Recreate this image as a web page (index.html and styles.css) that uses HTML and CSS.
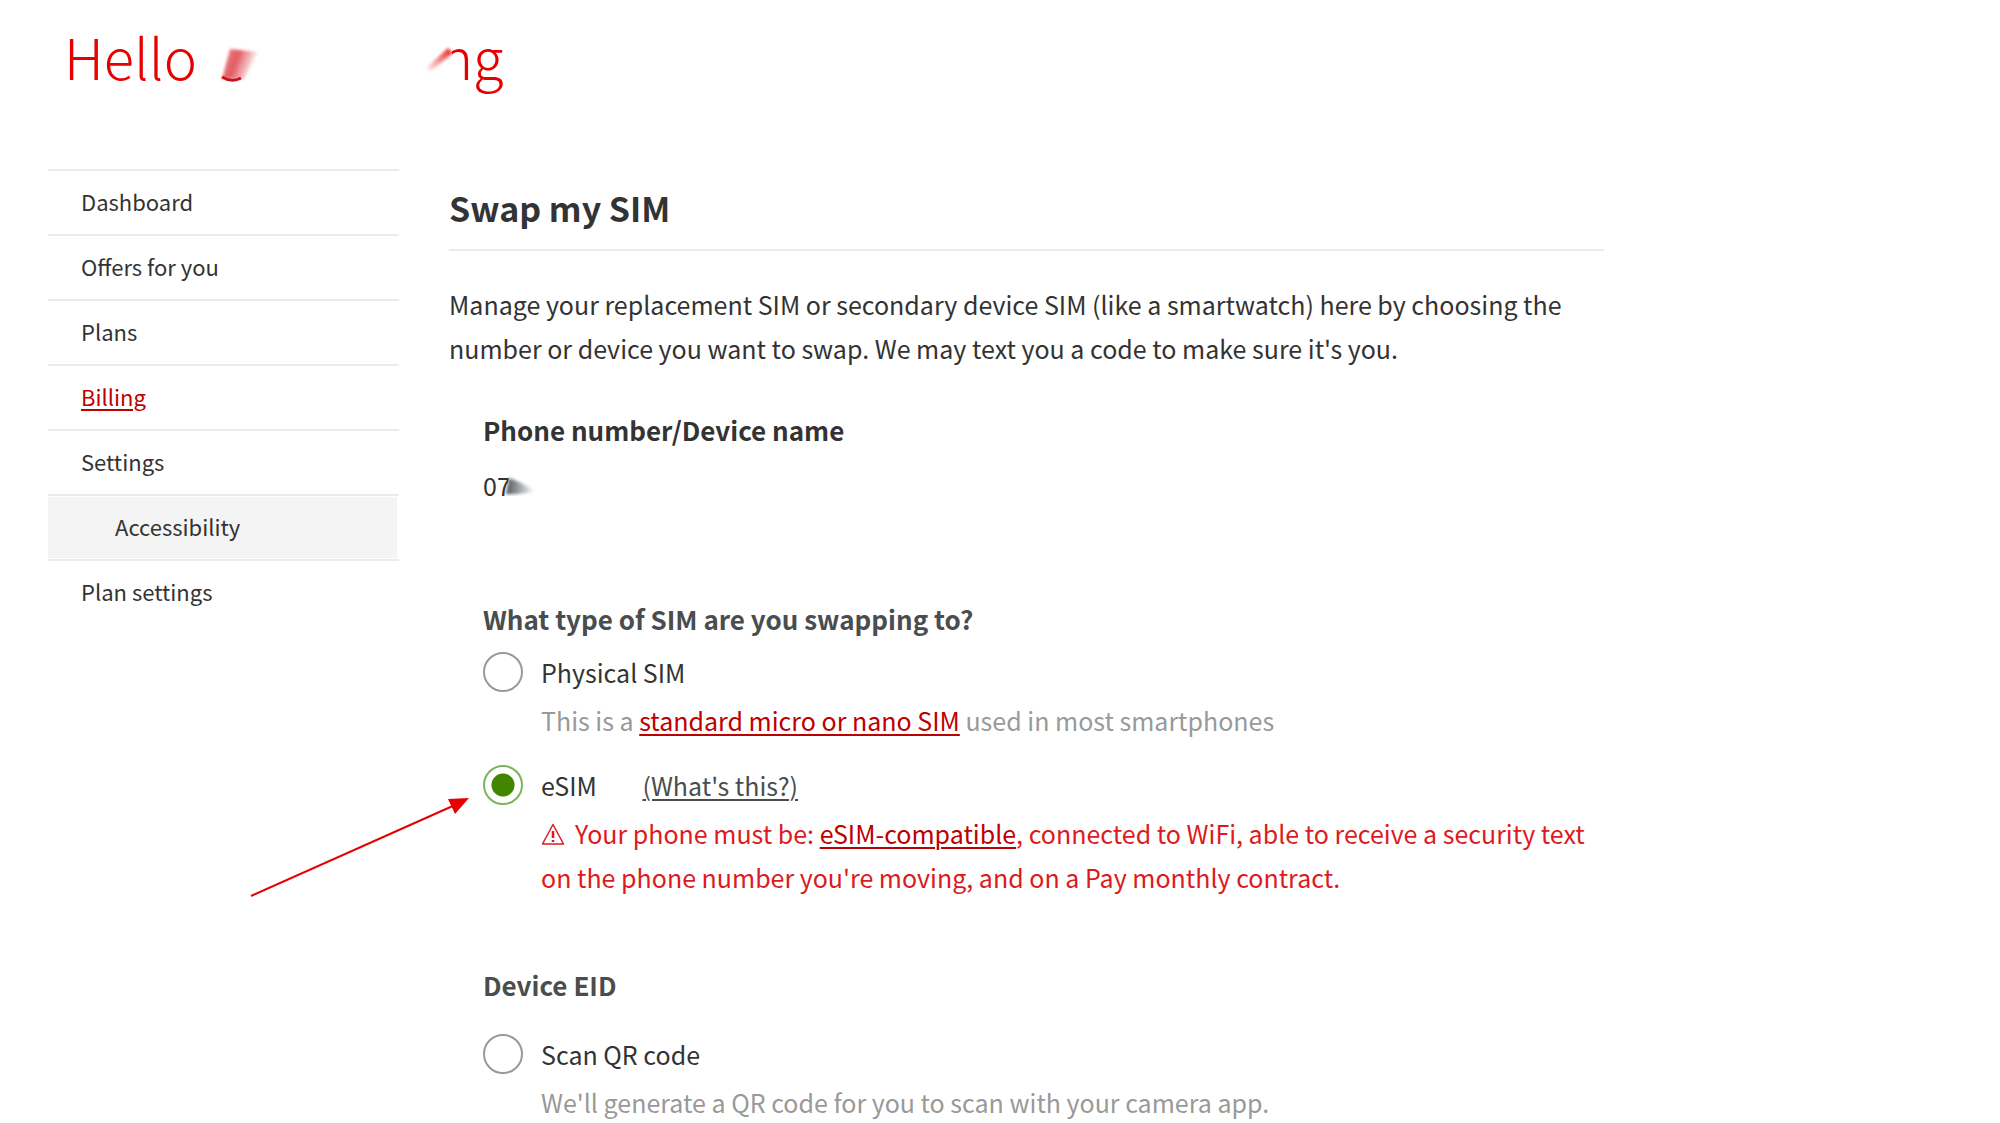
FILE: index.html
```html
<!DOCTYPE html>
<html lang="en">
<head>
    <meta charset="UTF-8">
    <meta name="viewport" content="width=device-width, initial-scale=1.0">
    <title>Swap my SIM</title>
    <link rel="stylesheet" href="styles.css">
</head>
<body>

    <header class="page-header">
        <h1>Hello
            <svg class="name-mask" width="292" height="70" viewBox="0 0 292 70" aria-hidden="true">
                <defs>
                    <linearGradient id="fadeRight" x1="0" y1="0" x2="1" y2="0.3">
                        <stop offset="0" stop-color="#d8202a" stop-opacity="0.45"></stop>
                        <stop offset="0.45" stop-color="#d8202a" stop-opacity="0.75"></stop>
                        <stop offset="1" stop-color="#d8202a" stop-opacity="0"></stop>
                    </linearGradient>
                    <linearGradient id="fadeLeft" x1="1" y1="0" x2="0" y2="1">
                        <stop offset="0" stop-color="#e60000" stop-opacity="0.9"></stop>
                        <stop offset="1" stop-color="#e60000" stop-opacity="0"></stop>
                    </linearGradient>
                    <filter id="soften" x="-20%" y="-20%" width="140%" height="140%">
                        <feGaussianBlur stdDeviation="1.5"></feGaussianBlur>
                    </filter>
                </defs>
                <path d="M226 14 L236 14 L238 24 L238 54 L226 54 Z" fill="#fff"></path>
                <path d="M16 19 L44 22 L30 49 L8 49 Z" fill="url(#fadeRight)" filter="url(#soften)"></path>
                <path d="M8 47 Q18 53 27 48" fill="none" stroke="#c8141c" stroke-width="3"></path>
                <path d="M234 18 L239 23 L216 42 L212 38 Z" fill="url(#fadeLeft)" filter="url(#soften)"></path>
            </svg><span class="name-end">ng</span>
        </h1>
    </header>

    <div class="layout">
        <nav class="side-nav">
            <ul>
                <li><a href="#">Dashboard</a></li>
                <li><a href="#">Offers for you</a></li>
                <li><a href="#">Plans</a></li>
                <li><a href="#" class="active">Billing</a></li>
                <li><a href="#">Settings</a></li>
                <li class="sub-item"><a href="#">Accessibility</a></li>
                <li><a href="#">Plan settings</a></li>
            </ul>
        </nav>

        <main class="content">
            <h2>Swap my SIM</h2>
            <p class="intro">Manage your replacement SIM or secondary device SIM (like a smartwatch) here by choosing the number or device you want to swap. We may text you a code to make sure it's you.</p>

            <form class="swap-form">
                <h3>Phone number/Device name</h3>
                <p class="phone-number">07<svg class="number-mask" width="32" height="24" viewBox="0 0 32 24" aria-hidden="true">
                    <defs>
                        <linearGradient id="fadeNumber" x1="0" y1="0" x2="1" y2="0">
                            <stop offset="0" stop-color="#222a33" stop-opacity="0.8"></stop>
                            <stop offset="1" stop-color="#222a33" stop-opacity="0"></stop>
                        </linearGradient>
                    </defs>
                    <path d="M4 3 L14 3 L10 24 L2 24 Z" fill="#fff"></path>
                    <path d="M4 6 Q14 9 30 19 Q14 23 1 22 Z" fill="url(#fadeNumber)" filter="url(#soften)"></path>
                </svg></p>

                <fieldset>
                    <legend>What type of SIM are you swapping to?</legend>
                    <div class="option">
                        <input type="radio" name="simType" id="physicalSim">
                        <div class="option-text">
                            <div class="option-label">
                                <label for="physicalSim">Physical SIM</label>
                            </div>
                            <p class="hint">This is a <a href="#">standard micro or nano SIM</a> used in most smartphones</p>
                        </div>
                    </div>
                    <div class="option">
                        <input type="radio" name="simType" id="esim" checked>
                        <div class="option-text">
                            <div class="option-label">
                                <label for="esim">eSIM</label>
                                <a href="#" class="whats-this">(What's this?)</a>
                            </div>
                            <p class="warning"><svg class="warning-icon" width="24" height="24" viewBox="0 0 24 24" aria-hidden="true">
                                <path d="M12 2.5 L22.5 22 L1.5 22 Z" fill="none" stroke="#dd1a20" stroke-width="1.5" stroke-linejoin="round"></path>
                                <path d="M12 9 V16 M12 18 V20" stroke="#dd1a20" stroke-width="2.5"></path>
                            </svg>Your phone must be: <a href="#">eSIM-compatible</a>, connected to WiFi, able to receive a security text on the phone number you're moving, and on a Pay monthly contract.</p>
                        </div>
                        <!-- arrow pointing at the selected option -->
                        <svg class="arrow" width="222" height="104" viewBox="0 0 222 104" aria-hidden="true">
                            <path d="M2 101 L206 10" stroke="#e60000" stroke-width="2"></path>
                            <path d="M220 3 L199 4 L206 19 Z" fill="#e60000"></path>
                        </svg>
                    </div>
                </fieldset>

                <fieldset class="eid">
                    <legend>Device EID</legend>
                    <div class="option">
                        <input type="radio" name="deviceEid" id="scanQr">
                        <div class="option-text">
                            <div class="option-label">
                                <label for="scanQr">Scan QR code</label>
                            </div>
                            <p class="hint">We'll generate a QR code for you to scan with your camera app.</p>
                        </div>
                    </div>
                </fieldset>
            </form>
        </main>
    </div>

</body>
</html>
```
FILE: styles.css
```css
* {
    box-sizing: border-box;
}

body {
    margin: 0;
    padding: 0 48px;
    font-family: "Noto Sans CJK SC", "Open Sans", sans-serif;
    font-size: 25px;
    line-height: 44px;
    color: #333;
    background-color: #fff;
}

h1, h2, h3, p, ul, fieldset, legend {
    margin: 0;
    padding: 0;
}

a {
    color: #bd0000;
    text-decoration-thickness: 2px;
    text-underline-offset: 3px;
}

.page-header {
    padding: 14px 16px 0;
    height: 169px;
}

.page-header h1 {
    display: flex;
    font-size: 56px;
    font-weight: 300;
    line-height: 84px;
    color: #e60000;
}

.name-mask {
    position: relative;
    margin: 16px -66px 0 17px;
    z-index: 1;
}

.layout {
    display: flex;
    align-items: flex-start;
    gap: 50px;
}

.side-nav {
    flex: 0 0 351px;
    font-size: 22px;
}

.side-nav ul {
    list-style: none;
}

.side-nav li {
    height: 65px;
    border-top: 2px solid #ebebeb;
}

.side-nav a {
    display: block;
    padding: 0 33px 2px;
    line-height: 61px;
    color: #333;
    text-decoration: none;
}

.side-nav a.active {
    color: #bd0000;
    text-decoration: underline;
    text-decoration-thickness: 2px;
}

.side-nav .sub-item a {
    margin: 1px 2px 1px 0;
    padding-left: 67px;
    line-height: 59px;
    background-color: #f4f4f4;
}

.content {
    flex: 1;
    max-width: 1155px;
}

h2 {
    padding: 16px 0 18px;
    border-bottom: 2px solid #ebebeb;
    font-size: 34px;
    line-height: 46px;
    color: #333;
}

.intro {
    padding-top: 31px;
}

.swap-form {
    padding: 38px 0 0 34px;
}

h3, legend {
    font-size: 26px;
    font-weight: bold;
    line-height: 44px;
}

.phone-number {
    margin-top: 11px;
}

.number-mask {
    position: relative;
    margin-left: -6px;
}

fieldset {
    margin-top: 90px;
    border: 0;
}

legend {
    color: #4a4d4e;
}

.option {
    position: relative;
    display: flex;
    gap: 18px;
    margin-top: 11px;
}

.option + .option {
    margin-top: 23px;
}

.option input {
    appearance: none;
    flex: 0 0 40px;
    height: 40px;
    margin: 0;
    border: 2px solid #999;
    border-radius: 50%;
    background-color: #fff;
}

.option input:checked {
    border-color: #7db35a;
    background: radial-gradient(circle, #428600 11px, #fff 12px);
}

.option-text {
    flex: 1;
}

.option-label {
    line-height: 40px;
}

.hint {
    margin-top: 6px;
    color: #999;
}

.whats-this {
    margin-left: 40px;
    color: #4a4d4e;
}

.warning {
    margin-top: 6px;
    color: #dd1a20;
}

.warning-icon {
    margin-right: 10px;
    vertical-align: -2px;
}

.arrow {
    position: absolute;
    top: 30px;
    left: -234px;
}

.eid {
    margin-top: 64px;
}

.eid .option {
    margin-top: 27px;
}
```
